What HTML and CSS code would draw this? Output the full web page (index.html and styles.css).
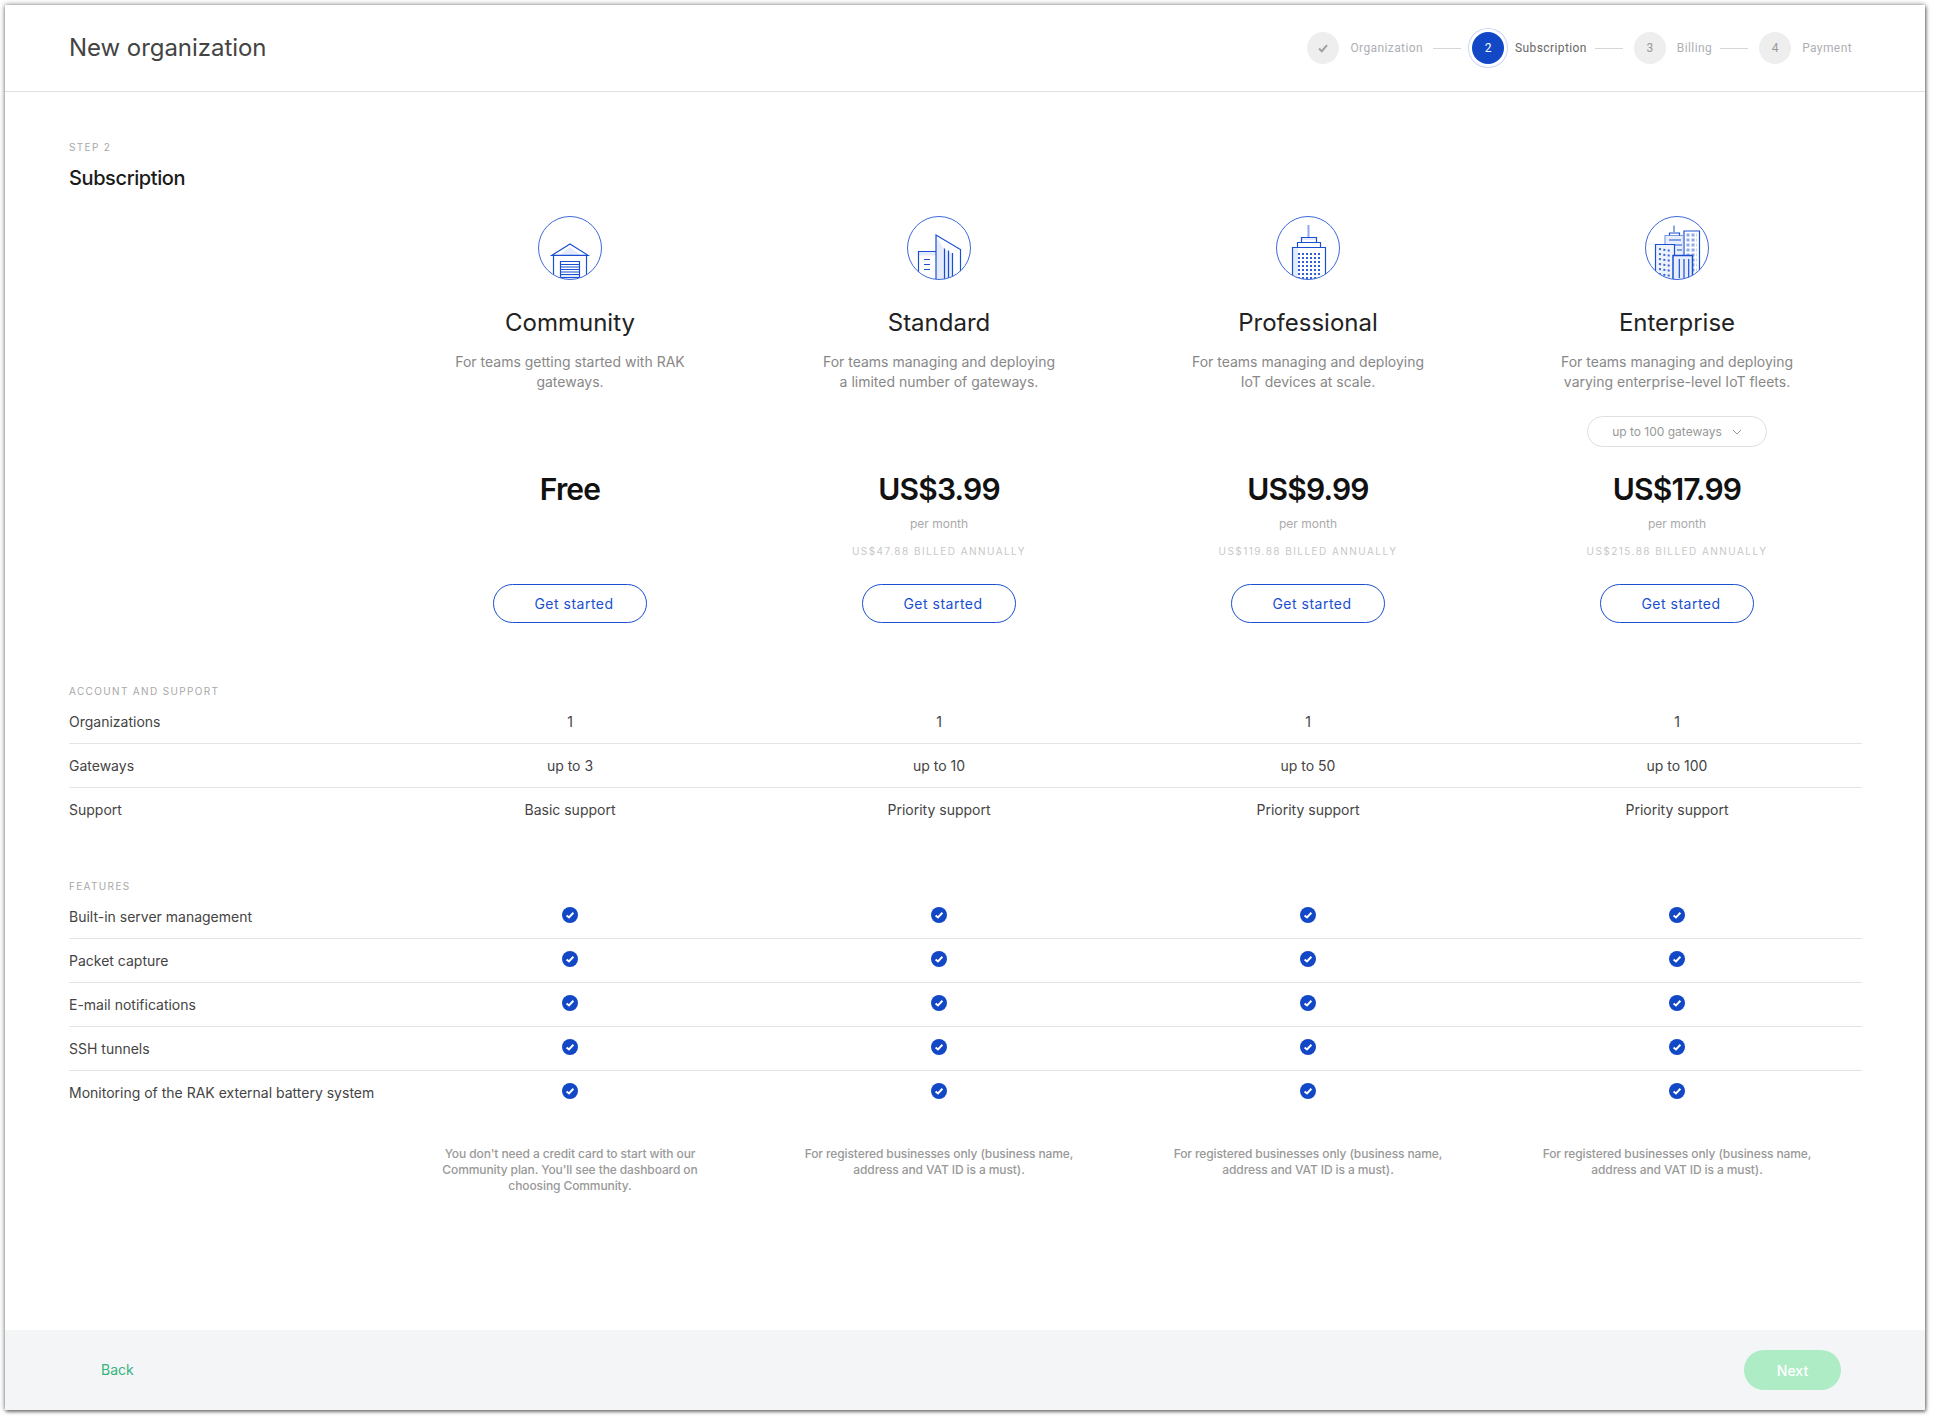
FILE: index.html
```html
<!DOCTYPE html>
<html lang="en">
<head>
    <meta charset="UTF-8">
    <meta name="viewport" content="width=device-width, initial-scale=1.0">
    <title>New organization</title>
    <link rel="stylesheet" href="styles.css">
</head>

<body>
    <svg class="defs" width="0" height="0">
        <defs>
            <clipPath id="disc"><circle cx="32" cy="32" r="31.5"></circle></clipPath>
            <symbol id="tick" viewBox="0 0 16 16">
                <circle cx="8" cy="8" r="8" fill="#1247c6"></circle>
                <path d="M4.6 8.4 L7 10.4 L11.4 5.8" fill="none" stroke="#fff" stroke-width="2"></path>
            </symbol>
        </defs>
    </svg>

    <div class="window">
        <!-- header -->
        <header class="topbar">
            <h1 class="title">New organization</h1>
            <ol class="steps">
                <li class="step done">
                    <span class="bubble">
                        <svg width="12" height="12" viewBox="0 0 12 12"><path d="M2 6.5 L4.8 9.2 L10 3.2" fill="none" stroke="#a0a0a0" stroke-width="2"></path></svg>
                    </span>
                    <span class="step-label">Organization</span>
                </li>
                <li class="step-line"></li>
                <li class="step active">
                    <span class="bubble">2</span>
                    <span class="step-label">Subscription</span>
                </li>
                <li class="step-line"></li>
                <li class="step">
                    <span class="bubble">3</span>
                    <span class="step-label">Billing</span>
                </li>
                <li class="step-line"></li>
                <li class="step">
                    <span class="bubble">4</span>
                    <span class="step-label">Payment</span>
                </li>
            </ol>
        </header>

        <main class="content">
            <div class="eyebrow">STEP 2</div>
            <h2 class="subtitle">Subscription</h2>

            <!-- plans -->
            <section class="plans">
                <div class="plan">
                    <svg class="plan-icon" width="64" height="64" viewBox="0 0 64 64">
                        <g clip-path="url(#disc)" fill="none" stroke="#1a4fd0" stroke-width="1.2">
                            <path d="M22 39 L32 31 L42 39 Z" fill="#e4ebfc" stroke="none"></path>
                            <rect x="22" y="58" width="20" height="6" fill="#e4ebfc" stroke="none"></rect>
                            <path d="M14 39.3 L32 28 L50 39.3 Z M15.5 39.3 V64 M48.5 39.3 V64"></path>
                            <path d="M22.5 64 V45.5 H41.5 V64 M22.5 48.5 H41.5 M22.5 51 H41.5 M22.5 53.5 H41.5 M22.5 56 H41.5 M22.5 58.5 H41.5 M22.5 61.5 H41.5"></path>
                        </g>
                        <circle cx="32" cy="32" r="31.5" fill="none" stroke="#3e69d6" stroke-width="1"></circle>
                    </svg>
                    <h3 class="plan-name">Community</h3>
                    <p class="plan-desc">For teams getting started with RAK gateways.</p>
                    <div class="select-slot"></div>
                    <div class="price">Free</div>
                    <div class="per">&nbsp;</div>
                    <div class="billed">&nbsp;</div>
                    <button class="start" type="button">Get started</button>
                </div>

                <div class="plan">
                    <svg class="plan-icon" width="64" height="64" viewBox="0 0 64 64">
                        <g clip-path="url(#disc)" fill="none" stroke="#1a4fd0" stroke-width="1.2">
                            <path d="M29 20 L37 33 V64 H29 Z M37 33 L46 38 V64 H37 Z" fill="#e4ebfc" stroke="none"></path>
                            <rect x="12" y="35.5" width="17" height="4" fill="#e4ebfc" stroke="none"></rect>
                            <path d="M11.5 64 V35.5 H29 M17 43.5 H23 M17 48.5 H23 M17 53.5 H23"></path>
                            <path d="M29 64 V19 L53.5 33.5 V64 M37.5 32.5 V64 M41.5 34.5 V64 M45.5 37 V64"></path>
                        </g>
                        <circle cx="32" cy="32" r="31.5" fill="none" stroke="#3e69d6" stroke-width="1"></circle>
                    </svg>
                    <h3 class="plan-name">Standard</h3>
                    <p class="plan-desc">For teams managing and deploying a limited number of gateways.</p>
                    <div class="select-slot"></div>
                    <div class="price">US$3.99</div>
                    <div class="per">per month</div>
                    <div class="billed">US$47.88 BILLED ANNUALLY</div>
                    <button class="start" type="button">Get started</button>
                </div>

                <div class="plan">
                    <svg class="plan-icon" width="64" height="64" viewBox="0 0 64 64">
                        <g clip-path="url(#disc)" fill="none" stroke="#1a4fd0" stroke-width="1.2">
                            <path d="M16.5 31.5 H22 V64 H16.5 Z M25.5 21.5 H40.5 V24 H25.5 Z" fill="#e4ebfc" stroke="none"></path>
                            <path d="M32.5 9 V21" stroke="#8fa9e8" stroke-width="2"></path>
                            <path d="M25.5 26.5 V21.5 H40.5 V26.5 M21.5 31.5 V26.5 H44.5 V31.5 M16.5 64 V31.5 H49.5 V64"></path>
                            <path d="M22 38 H44 M22 42 H44 M22 46 H44 M22 50 H44 M22 54 H44 M22 58 H44 M22 62 H44" stroke="#2f5fd6" stroke-width="2" stroke-dasharray="2 2"></path>
                        </g>
                        <circle cx="32" cy="32" r="31.5" fill="none" stroke="#3e69d6" stroke-width="1"></circle>
                    </svg>
                    <h3 class="plan-name">Professional</h3>
                    <p class="plan-desc">For teams managing and deploying IoT devices at scale.</p>
                    <div class="select-slot"></div>
                    <div class="price">US$9.99</div>
                    <div class="per">per month</div>
                    <div class="billed">US$119.88 BILLED ANNUALLY</div>
                    <button class="start" type="button">Get started</button>
                </div>

                <div class="plan">
                    <svg class="plan-icon" width="64" height="64" viewBox="0 0 64 64">
                        <g clip-path="url(#disc)" fill="none" stroke="#1a4fd0" stroke-width="1.2">
                            <path d="M39 15 H54.5 V64 H39 Z" fill="#fff"></path>
                            <path d="M41.5 19 H52 M41.5 24 H52 M41.5 29 H52 M41.5 34 H52 M41.5 39 H52 M41.5 44 H52 M41.5 49 H52 M41.5 54 H52" stroke="#8fa9e8" stroke-width="3" stroke-dasharray="3 2"></path>
                            <path d="M20 19.5 H38.5 V45 H20 Z" stroke="#7e9be6" fill="#e8eefc"></path>
                            <path d="M24.5 19.5 V17 H34.5 V19.5 M24 24 H36 M30 29 H37 M32 34 H37"></path>
                            <path d="M29 9.5 V17" stroke="#8fa9e8" stroke-width="2"></path>
                            <path d="M10.5 64 V28.5 H29.5 V64 Z" fill="#eef2fd"></path>
                            <path d="M14 33 L27 35 M14 38 L27 40 M14 43 L27 45 M14 48 L27 50 M14 53 L27 55 M14 58 L27 60" stroke="#3a68d8" stroke-width="2" stroke-dasharray="2 2.4"></path>
                            <path d="M28 64 V39.5 H47.5 V64 Z" fill="#e8eefc" stroke-width="1.5"></path>
                            <path d="M34.3 43 V62 M39 43 V62 M43.7 43 V62"></path>
                        </g>
                        <circle cx="32" cy="32" r="31.5" fill="none" stroke="#3e69d6" stroke-width="1"></circle>
                    </svg>
                    <h3 class="plan-name">Enterprise</h3>
                    <p class="plan-desc">For teams managing and deploying varying enterprise-level IoT fleets.</p>
                    <div class="select-slot">
                        <div class="select">
                            up to 100 gateways
                            <svg width="10" height="6" viewBox="0 0 10 6"><path d="M1 1 L5 5 L9 1" fill="none" stroke="#999" stroke-width="1"></path></svg>
                        </div>
                    </div>
                    <div class="price">US$17.99</div>
                    <div class="per">per month</div>
                    <div class="billed">US$215.88 BILLED ANNUALLY</div>
                    <button class="start" type="button">Get started</button>
                </div>
            </section>

            <!-- account and support -->
            <div class="eyebrow section-account">ACCOUNT AND SUPPORT</div>
            <div class="row"><span>Organizations</span><span>1</span><span>1</span><span>1</span><span>1</span></div>
            <div class="row"><span>Gateways</span><span>up to 3</span><span>up to 10</span><span>up to 50</span><span>up to 100</span></div>
            <div class="row last"><span>Support</span><span>Basic support</span><span>Priority support</span><span>Priority support</span><span>Priority support</span></div>

            <!-- features -->
            <div class="eyebrow section-features">FEATURES</div>
            <div class="row">
                <span>Built-in server management</span>
                <svg class="check"><use href="#tick"></use></svg>
                <svg class="check"><use href="#tick"></use></svg>
                <svg class="check"><use href="#tick"></use></svg>
                <svg class="check"><use href="#tick"></use></svg>
            </div>
            <div class="row">
                <span>Packet capture</span>
                <svg class="check"><use href="#tick"></use></svg>
                <svg class="check"><use href="#tick"></use></svg>
                <svg class="check"><use href="#tick"></use></svg>
                <svg class="check"><use href="#tick"></use></svg>
            </div>
            <div class="row">
                <span>E-mail notifications</span>
                <svg class="check"><use href="#tick"></use></svg>
                <svg class="check"><use href="#tick"></use></svg>
                <svg class="check"><use href="#tick"></use></svg>
                <svg class="check"><use href="#tick"></use></svg>
            </div>
            <div class="row">
                <span>SSH tunnels</span>
                <svg class="check"><use href="#tick"></use></svg>
                <svg class="check"><use href="#tick"></use></svg>
                <svg class="check"><use href="#tick"></use></svg>
                <svg class="check"><use href="#tick"></use></svg>
            </div>
            <div class="row last">
                <span>Monitoring of the RAK external battery system</span>
                <svg class="check"><use href="#tick"></use></svg>
                <svg class="check"><use href="#tick"></use></svg>
                <svg class="check"><use href="#tick"></use></svg>
                <svg class="check"><use href="#tick"></use></svg>
            </div>

            <div class="notes">
                <span></span>
                <p>You don't need a credit card to start with our Community plan. You'll see the dashboard on choosing Community.</p>
                <p>For registered businesses only (business name, address and VAT ID is a must).</p>
                <p>For registered businesses only (business name, address and VAT ID is a must).</p>
                <p>For registered businesses only (business name, address and VAT ID is a must).</p>
            </div>
        </main>

        <!-- footer -->
        <footer class="bottombar">
            <a class="back" href="#">Back</a>
            <button class="next" type="button">Next</button>
        </footer>
    </div>
</body>
</html>
```

FILE: styles.css
```css
* {
    box-sizing: border-box;
}

body {
    margin: 0;
    padding: 5px 9px 9px 5px;
    background-color: #fff;
    font-family: Inter, "Liberation Sans", sans-serif;
    color: #333;
}

.defs {
    display: block;
}

.window {
    display: flex;
    flex-direction: column;
    width: 1920px;
    height: 1405px;
    background-color: #fff;
    box-shadow: 0 0 5px rgba(0, 0, 0, 0.55), 1px 2px 3px rgba(0, 0, 0, 0.35);
}

/* header */
.topbar {
    display: flex;
    flex: none;
    align-items: center;
    justify-content: space-between;
    height: 87px;
    padding: 0 73px 0 64px;
    border-bottom: 1px solid #dedfe1;
}

.title {
    margin: 0;
    font-size: 24px;
    font-weight: 400;
    line-height: 32px;
    letter-spacing: -0.05px;
    color: #444;
}

.steps {
    display: flex;
    align-items: center;
    margin: 0;
    padding: 0;
    list-style: none;
}

.step {
    display: flex;
    align-items: center;
    font-family: Roboto, sans-serif;
    font-size: 12px;
    color: #aeb0b3;
}

.step.done {
    margin-right: 2px;
}

.bubble {
    display: flex;
    align-items: center;
    justify-content: center;
    width: 32px;
    height: 32px;
    margin-right: 11px;
    border-radius: 50%;
    background-color: #eeeeee;
    color: #999;
}

.step-label {
    letter-spacing: 0.4px;
}

.step.active .bubble {
    background-color: #1247c6;
    color: #fff;
    box-shadow: 0 0 0 3px #fff, 0 0 0 4px #cdd8f3;
}

.step.active {
    color: #666;
}

.step-line {
    width: 28px;
    height: 1px;
    margin: 0 11px 0 8px;
    background-color: #d6d6d6;
}

/* main */
.content {
    flex: 1;
    padding: 47px 64px 0;
}

.eyebrow {
    font-size: 10px;
    line-height: 16px;
    letter-spacing: 1.35px;
    color: #a8a8a8;
}

.subtitle {
    margin: 9px 0 0;
    font-size: 20px;
    font-weight: 500;
    line-height: 28px;
    letter-spacing: -0.4px;
    color: #1a1a1a;
}

.plans,
.row,
.notes {
    display: grid;
    grid-template-columns: 316.5px repeat(4, 369px);
    width: 1792.5px;
}

.plans {
    margin-top: 24px;
}

.plan {
    display: flex;
    flex-direction: column;
    align-items: center;
    text-align: center;
}

.plan:first-child {
    grid-column-start: 2;
}

.plan-icon {
    display: block;
}

.plan-name {
    margin: 27px 0 0;
    font-size: 24px;
    font-weight: 400;
    line-height: 32px;
    color: #222;
}

.plan-desc {
    width: 238px;
    height: 40px;
    margin: 13px 0 0;
    font-size: 14px;
    line-height: 20px;
    color: #888;
}

.select-slot {
    height: 32px;
    margin-top: 24px;
}

.select {
    display: flex;
    align-items: center;
    justify-content: center;
    gap: 10px;
    width: 180px;
    height: 31px;
    border: 1px solid #dedfe1;
    border-radius: 16px;
    font-size: 12px;
    color: #999;
}

.price {
    margin-top: 21px;
    font-size: 30px;
    font-weight: 600;
    line-height: 40px;
    letter-spacing: -0.8px;
    color: #111;
}

.per {
    margin-top: 7px;
    font-size: 12px;
    line-height: 16px;
    color: #aaa;
}

.billed {
    margin-top: 11px;
    font-size: 10px;
    line-height: 16px;
    letter-spacing: 1.45px;
    color: #c8c8c8;
}

.start {
    width: 154px;
    height: 39px;
    margin-top: 25px;
    padding: 0 0 0 8px;
    border: 1px solid #1a4fd0;
    border-radius: 20px;
    background-color: #fff;
    font-family: inherit;
    font-size: 14px;
    letter-spacing: 0.5px;
    color: #1a4fd0;
}

/* tables */
.section-account {
    margin-top: 60px;
}

.section-features {
    margin-top: 46px;
}

.row {
    align-items: center;
    justify-items: center;
    height: 44px;
    border-bottom: 1px solid #e4e4e4;
    font-size: 14px;
    color: #444;
}

.eyebrow + .row {
    margin-top: 1px;
}

.row.last {
    border-bottom-color: transparent;
}

.row > span:first-child {
    justify-self: start;
}

.check {
    width: 16px;
    height: 16px;
    margin-bottom: 4px;
}

.notes {
    justify-items: center;
    margin-top: 31px;
    font-size: 12px;
    font-weight: 500;
    line-height: 16px;
    letter-spacing: -0.1px;
    text-align: center;
    color: #999;
}

.notes p {
    width: 280px;
    margin: 0;
}

/* footer */
.bottombar {
    display: flex;
    flex: none;
    align-items: center;
    justify-content: space-between;
    height: 80px;
    padding: 0 84px 0 96px;
    background-color: #f4f5f7;
}

.back {
    margin-bottom: 2px;
    font-size: 14px;
    color: #36b37e;
    text-decoration: none;
}

.next {
    width: 97px;
    height: 40px;
    border: none;
    border-radius: 20px;
    background-color: #aeecc6;
    font-family: inherit;
    font-size: 14px;
    font-weight: 500;
    color: #fff;
}
```
